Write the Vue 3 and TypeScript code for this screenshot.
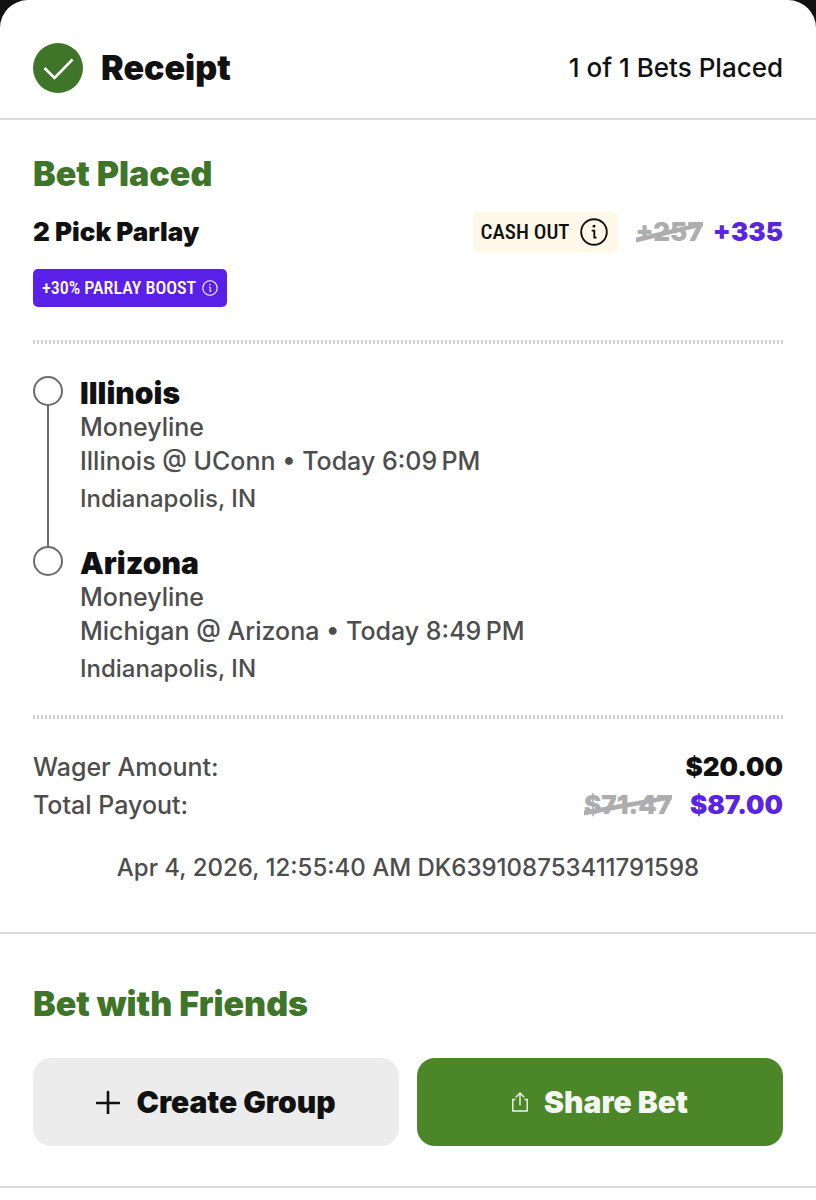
<script setup lang="ts">
interface Leg {
  pick: string
  market: string
  event: string
  venue: string
}

const legs: Leg[] = [
  { pick: 'Illinois', market: 'Moneyline', event: 'Illinois @ UConn • Today 6:09\u202fPM', venue: 'Indianapolis, IN' },
  { pick: 'Arizona', market: 'Moneyline', event: 'Michigan @ Arizona • Today 8:49\u202fPM', venue: 'Indianapolis, IN' },
]
</script>

<template>
  <main class="sheet">
    <header class="top">
      <svg class="check" viewBox="0 0 50 50" aria-hidden="true">
        <circle cx="25" cy="25" r="25" fill="#3f7529" />
        <path d="M11.5 25 L21.5 35 L39.5 16.5" fill="none" stroke="#fff" stroke-width="2.6" />
      </svg>
      <h1>Receipt</h1>
      <p class="count">1 of 1 Bets Placed</p>
    </header>

    <section class="bet">
      <h2>Bet Placed</h2>
      <div class="summary">
        <h3>2 Pick Parlay</h3>
        <button type="button" class="cashout">
          <span>CASH OUT</span>
          <svg class="info" viewBox="0 0 28 28" aria-hidden="true">
            <circle cx="14" cy="14" r="12.8" fill="none" stroke="#111" stroke-width="1.9" />
            <circle cx="14" cy="8.2" r="1.4" fill="#111" />
            <path d="M11.7 12.6 H14.3 V19.6 M13.4 19.6 H16.6" fill="none" stroke="#111" stroke-width="1.9" />
          </svg>
        </button>
        <s class="old">+257<svg viewBox="0 0 100 100" preserveAspectRatio="none" aria-hidden="true"><path d="M0 66 L100 20 V33 L0 81 Z" fill="#adadad" /></svg></s>
        <strong class="boosted">+335</strong>
      </div>
      <button type="button" class="boost">
        <span>+30% PARLAY BOOST</span>
        <svg class="info-small" viewBox="0 0 16 16" aria-hidden="true">
          <circle cx="8" cy="8" r="7.2" fill="none" stroke="#fff" stroke-width="1.1" />
          <circle cx="8" cy="4.8" r="0.8" fill="#fff" />
          <path d="M6.9 7.2 H8.2 V11.2 M7.6 11.2 H9.4" fill="none" stroke="#fff" stroke-width="1" />
        </svg>
      </button>

      <ul class="legs">
        <li v-for="leg in legs" :key="leg.pick" class="leg">
          <div class="track"><span class="dot"></span><span class="line"></span></div>
          <div class="details">
            <h4>{{ leg.pick }}</h4>
            <p>{{ leg.market }}</p>
            <p>{{ leg.event }}</p>
            <p class="venue">{{ leg.venue }}</p>
          </div>
        </li>
      </ul>

      <dl class="totals">
        <div>
          <dt>Wager Amount:</dt>
          <dd><strong>$20.00</strong></dd>
        </div>
        <div>
          <dt>Total Payout:</dt>
          <dd>
            <s class="old">$71.47<svg viewBox="0 0 100 100" preserveAspectRatio="none" aria-hidden="true"><path d="M0 66 L100 20 V33 L0 81 Z" fill="#adadad" /></svg></s>
            <strong class="boosted">$87.00</strong>
          </dd>
        </div>
      </dl>
      <p class="stamp">Apr 4, 2026, 12:55:40 AM DK639108753411791598</p>
    </section>

    <section class="friends">
      <h2>Bet with Friends</h2>
      <div class="actions">
        <button type="button" class="action create">
          <svg class="plus" viewBox="0 0 24 24" aria-hidden="true">
            <path d="M12 2 V24 M1 13 H23" fill="none" stroke="#111" stroke-width="2.6" stroke-linecap="round" />
          </svg>
          <span>Create Group</span>
        </button>
        <button type="button" class="action share">
          <svg class="upload" viewBox="0 0 16 20" aria-hidden="true">
            <path d="M3.5 7.5 H0.8 V19 H15.2 V7.5 H12.5 M8 13.5 V1.2 M3.8 5.2 L8 1 L12.2 5.2" fill="none" stroke="#f3f6f1" stroke-width="1.4" />
          </svg>
          <span>Share Bet</span>
        </button>
      </div>
    </section>
  </main>
</template>

<style>
body {
  background: #fff;
}
</style>

<style scoped>
.sheet {
  box-sizing: border-box;
  min-height: 100vh;
  color: #111;
  font-family: Inter, "Liberation Sans", sans-serif;
  font-size: 26px;
  line-height: 34px;
  font-weight: 500;
  background: linear-gradient(#111, #111) top / 100% 40px no-repeat;
}
h1, h2, h3, h4, p, ul, dl, dd {
  margin: 0;
  padding: 0;
}
button {
  border: 0;
  font: inherit;
  color: inherit;
  cursor: pointer;
}
svg {
  flex: none;
  display: block;
}
.top {
  display: flex;
  align-items: center;
  height: 118px;
  padding: 18px 33px 0;
  box-sizing: border-box;
  border-radius: 28px 28px 0 0;
  background: #fff;
}
.check {
  width: 50px;
  height: 50px;
}
h1 {
  margin-left: 18px;
  font-size: 34px;
  font-weight: 900;
}
.count {
  margin-left: auto;
}
.bet {
  padding: 34px 33px 47px;
  border-top: 2px solid #dadada;
  border-bottom: 2px solid #dadada;
}
h2 {
  color: #3f7529;
  font-size: 34px;
  line-height: 40px;
  font-weight: 900;
}
.summary {
  display: flex;
  align-items: center;
  margin-top: 17px;
}
h3 {
  margin-right: auto;
  font-size: 26px;
  font-weight: 900;
}
.cashout {
  display: flex;
  align-items: center;
  gap: 10px;
  height: 42px;
  padding: 0 10px 0 8px;
  margin-right: 18px;
  border-radius: 6px;
  background: #fef8e8;
  font-family: "Roboto Condensed", "Open Sans Condensed", "Noto Sans Condensed", Roboto, sans-serif;
  font-size: 21px;
  font-weight: 500;
}
.info {
  width: 28px;
  height: 28px;
}
.old {
  display: inline-block;
  position: relative;
  line-height: 34px;
  color: #adadad;
  font-weight: 900;
  text-decoration: none;
}
.old svg {
  position: absolute;
  top: 0;
  left: 0;
  width: 100%;
  height: 100%;
}
.boosted {
  margin-left: 10px;
  color: #5a25e0;
}
strong {
  font-weight: 900;
}
.boost {
  display: flex;
  align-items: center;
  gap: 6px;
  height: 38px;
  margin-top: 16px;
  padding: 0 9px;
  border-radius: 5px;
  background: #5b20e8;
  color: #fff;
  font-family: "Roboto Condensed", "Open Sans Condensed", "Noto Sans Condensed", Roboto, sans-serif;
  font-size: 18px;
  font-weight: 500;
}
.info-small {
  width: 16px;
  height: 16px;
}
.legs,
.totals {
  list-style: none;
}
.legs::before,
.totals::before {
  content: "";
  display: block;
  height: 4px;
  background: repeating-linear-gradient(90deg, #d2d2d2 0 2px, #fff 2px 4px);
}
.legs {
  margin-top: 33px;
}
.legs::before {
  margin-bottom: 32px;
}
.leg {
  display: flex;
  gap: 17px;
  height: 170px;
  color: #4d4d4d;
  font-size: 25px;
}
.leg:last-child {
  height: 169px;
}
.track {
  display: flex;
  flex-direction: column;
  align-items: center;
  width: 30px;
}
.dot {
  box-sizing: border-box;
  width: 30px;
  height: 30px;
  border: 2px solid #6b6b6b;
  border-radius: 50%;
}
.line {
  flex: 1;
  width: 2px;
  background: #6b6b6b;
}
.leg:last-child .line {
  display: none;
}
h4 {
  color: #111;
  font-size: 30px;
  font-weight: 900;
}
.venue {
  margin-top: 4px;
  font-size: 24px;
}
.totals::before {
  margin-bottom: 29px;
}
.totals > div {
  display: flex;
  justify-content: space-between;
  line-height: 38px;
}
.totals dt {
  color: #4d4d4d;
  font-size: 25px;
}
.totals dd {
  display: flex;
  align-items: center;
}
.totals .boosted {
  margin-left: 18px;
}
.stamp {
  margin-top: 27px;
  color: #4d4d4d;
  font-size: 24px;
  text-align: center;
}
.friends {
  padding: 50px 33px 40px;
  border-bottom: 2px solid #dadada;
}
.actions {
  display: grid;
  grid-template-columns: 1fr 1fr;
  gap: 18px;
  margin-top: 34px;
}
.action {
  display: flex;
  align-items: center;
  justify-content: center;
  gap: 16px;
  height: 88px;
  padding: 0;
  border-radius: 18px;
  font-size: 30px;
  font-weight: 900;
}
.create {
  background: #ececec;
}
.share {
  background: #4b8628;
  color: #f3f6f1;
}
.plus {
  width: 24px;
  height: 24px;
}
.upload {
  width: 16px;
  height: 20px;
}
</style>
